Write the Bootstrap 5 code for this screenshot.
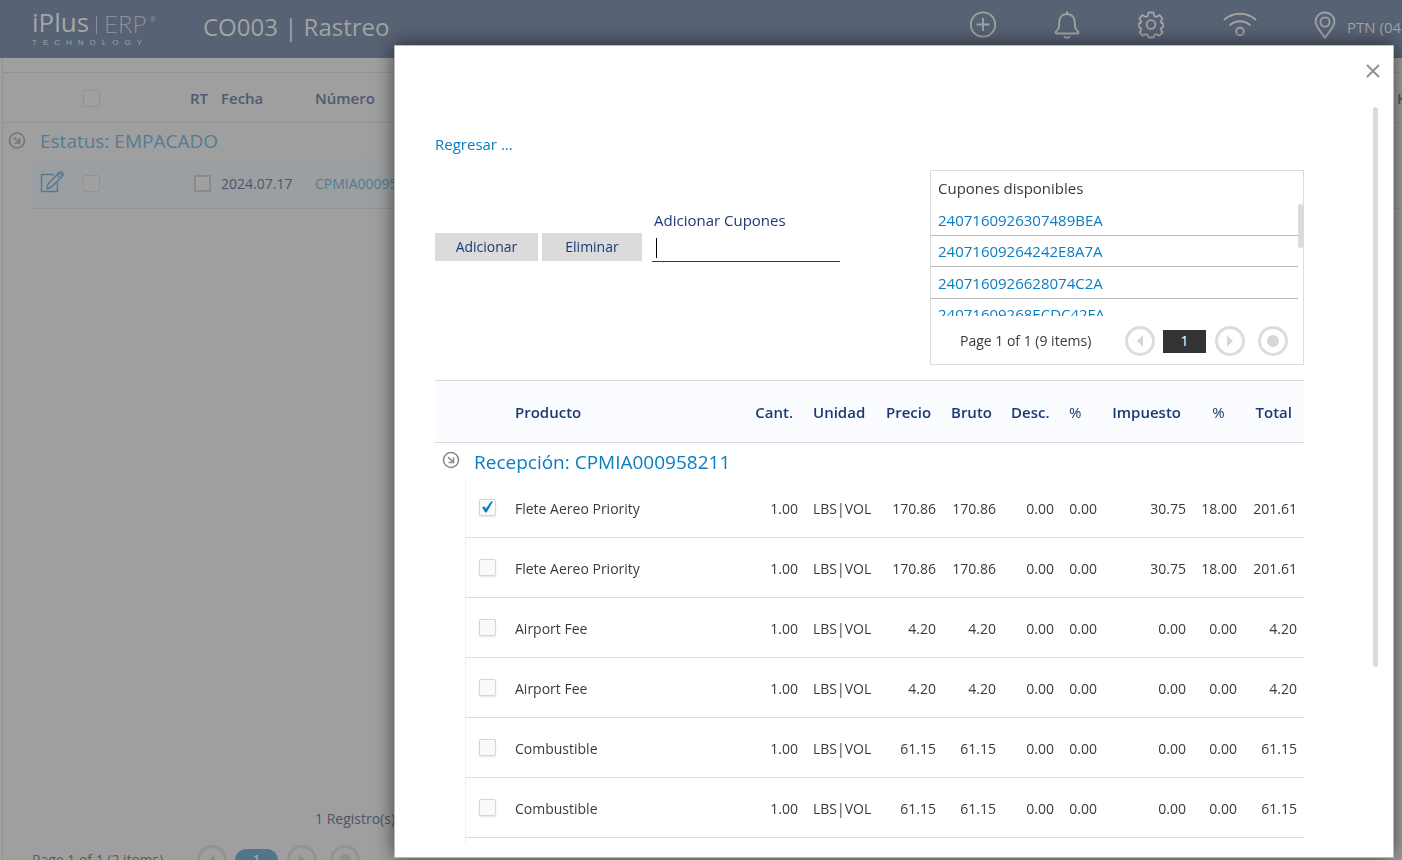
<!DOCTYPE html>
<html lang="es">
<head>
<meta charset="utf-8">
<meta name="viewport" content="width=device-width, initial-scale=1">
<title>CO003 | Rastreo</title>
<link href="https://cdn.jsdelivr.net/npm/bootstrap@5.3.0/dist/css/bootstrap.min.css" rel="stylesheet">
<style>
  body { font-family: "Open Sans", "Noto Sans", sans-serif; font-size: 14px; line-height: 20px; background: #9f9f9f; color: #4b5568; height: 100vh; }
  a { text-decoration: none; }
  svg { display: block; fill: none; stroke: currentColor; }

  /* top bar */
  .topbar { height: 58px; background: #576274; color: #a3a3a3; }
  .brand { width: 203px; padding: 9px 0 0 32px; color: #a3a5a9; }
  .brand-name { font-size: 26px; line-height: 26px; height: 30px; gap: 7px; }
  .brand-name .bar { width: 1px; height: 18px; background: #8a919c; margin-top: 7px; }
  .brand-name .thin { font-family: "Lato", sans-serif; font-weight: 300; font-size: 24px; line-height: 30px; color: #8a919c; }
  .brand-name .reg { font-size: 8px; line-height: 20px; color: #8a919c; margin-left: -4px; }
  .brand-sub { font-family: "Liberation Sans", sans-serif; font-size: 8px; line-height: 8px; letter-spacing: 6px; color: #9ca1a8; }
  .page-title { font-size: 24px; font-weight: 400; line-height: 54px; }
  .tools { width: 461px; height: 50px; }
  .tools button { width: 84px; flex-shrink: 0; border: 0; background: none; color: inherit; padding: 0; }
  .tools .wide { width: 94px; }
  .tools .place { width: auto; padding-left: 26px; gap: 10px; font-size: 15px; }

  /* dimmed grid */
  .board { margin-left: 2px; border-left: 1px solid #929292; padding-top: 14px; overflow: hidden; }
  .board table { table-layout: fixed; width: 1500px; border-collapse: separate; border-spacing: 0; }
  .board th { height: 51px; border: solid #929292; border-width: 1px 0; font-size: 15px; font-weight: 600; color: #505b70; padding: 1px 0 0; }
  .board td { padding: 0; }
  .board .grp td { height: 36px; font-size: 19px; color: #557b93; }
  .board .item td { height: 50px; background: #9c9fa1; border-bottom: 1px solid #929292; }
  .board .item td:first-child { background: none; border: 0; }
  .board .item a, .board .edit { color: #557b93; }
  .edit { border: 0; background: none; padding: 0 0 0 7px; }
  .tick.dim { border-color: #929292; background: #a0a0a0; box-shadow: none; margin-left: 1px; }
  .tick.thick { border: 2px solid #8a8a8a; border-radius: 0; margin-left: 12px; }
  .total { padding: 600px 0 0 312px; height: 625px; }
  .board .pager { padding-left: 29px; color: #5c5c5c; height: 52px; }
  .board .pager .ring { border-color: #929292; color: #8f8f8f; }
  .board .pager .num { background: #52758a; border-radius: 12px; color: #a9b4ba; }

  .tick { appearance: none; display: block; width: 17px; height: 17px; margin: 0; border: 1px solid #d6d6d6; border-radius: 2px; background: #fafafa; box-shadow: 0 1px 2px #e4e4e4; }
  .tick:checked { background: #fafafa url("data:image/svg+xml,%3Csvg xmlns='http://www.w3.org/2000/svg' viewBox='0 0 15 15'%3E%3Cpath d='M2.200 7.500 4.200 6.300 5.800 8.700 11 1.500 13 1.500 6.500 12.500 5.200 12.500Z' fill='%230a7cc1'/%3E%3C/svg%3E") center/15px no-repeat; }

  .pager { height: 50px; }
  .pager-text { width: 165px; }
  .ring { width: 30px; height: 30px; border: 3px solid #dcdcdc; border-radius: 50%; background: none; color: #d6d6d6; padding: 0; display: flex; align-items: center; justify-content: center; }
  .ring svg { fill: currentColor; stroke: none; }
  .ring.all { margin-left: 13px; }
  .num { width: 43px; height: 23px; background: #333; color: #fff; border: 0; padding: 0; margin: 0 9px 0 8px; }

  /* popup */
  .popup { position: fixed; top: 45px; right: 8px; bottom: 2px; left: 394px; background: #fff; border: 1px solid #bdbdbd; box-shadow: 0 0 18px rgba(0, 0, 0, .6); color: #3a3a3a; }
  .popup-body { height: calc(100% - 12px); padding: 0 89px 0 40px; overflow: hidden; }
  .closer { position: absolute; top: 13px; right: 8px; width: 24px; height: 24px; padding: 0; border: 0; background: none; color: #919191; display: flex; align-items: center; justify-content: center; }
  .thumb { position: absolute; background: #dbdbdb; border-radius: 3px; width: 5px; }
  .popup-body > .thumb { top: 61px; right: 15px; height: 560px; }
  .popup a { color: #0a7cc1; font-size: 15px; }
  .back { padding-top: 88px; height: 124px; }
  .entry { padding-top: 40px; }
  .act { background: #dbdbdb; color: #1b3a74; border: 0; height: 28px; width: 103px; padding: 0 0 1px; margin-bottom: 1px; }
  .act + .act { width: 100px; margin-left: 4px; }
  .field { color: #1b3a74; width: 188px; margin-left: 10px; font-size: 15px; }
  .field label { display: block; padding-left: 2px; height: 24px; }
  .field input { width: 100%; height: 28px; border: 0; border-bottom: 1px solid #1b3a74; padding: 0 4px; outline: 0; caret-color: transparent; background: linear-gradient(#000, #000) 4px 4px / 1px 20px no-repeat; }
  .coupons { width: 374px; height: 195px; border: 1px solid #dbdbdb; margin-top: 124px; }
  .coupons h2 { font-size: 15px; line-height: 35px; height: 33px; padding-left: 7px; margin: 0; }
  .coupon-list { height: 112px; overflow: hidden; padding: 0 5px 0 0; }
  .coupon-list li { height: 31px; border-bottom: 1px solid #b9b9b9; padding-left: 7px; line-height: 31px; }
  .coupon-list li:nth-child(odd) { height: 32px; line-height: 32px; }
  .coupon-list .thumb { right: 0; top: 0; height: 44px; }
  .coupons .pager { padding-left: 29px; }

  .lines { margin-top: 15px; width: 100%; table-layout: fixed; border-collapse: separate; border-spacing: 0; }
  .lines th { height: 63px; background: #fafcff; border: solid #dbdbdb; border-width: 1px 0; color: #1b3a74; font-size: 15px; font-weight: 600; padding: 0 12px 0 8px; }
  .lines th.pct { font-weight: 400; }
  .lines td { padding: 2px 7px 0 8px; }
  .lines .grp td { height: 35px; padding: 2px 0 0 8px; font-size: 19px; color: #0a7cc1; }
  .lines .grp td:first-child { padding: 0 0 2px 6px; }
  .lines .item td { height: 60px; border-bottom: 1px solid #dbdbdb; }
  .lines .item td:first-child { border-bottom: 0; border-right: 1px solid #f0f0f0; }
  .lines .item td:nth-child(2) { padding: 0 0 0 13px; }
  .lines .mark-open { color: #8c8c8c; }
  .board .mark-open { color: #757575; }
</style>
<script src="https://cdn.jsdelivr.net/npm/bootstrap@5.3.0/dist/js/bootstrap.bundle.min.js"></script>
</head>
<body class="overflow-hidden">

<header class="topbar d-flex align-items-start overflow-hidden text-nowrap">
  <div class="brand flex-shrink-0">
    <div class="brand-name d-flex"><span>iPlus</span><span class="bar"></span><span class="thin">ERP</span><span class="reg">®</span></div>
    <div class="brand-sub">TECHNOLOGY</div>
  </div>
  <h1 class="page-title m-0">CO003 | Rastreo</h1>
  <div class="tools ms-auto d-flex flex-shrink-0">
    <button class="d-flex align-items-center justify-content-center" aria-label="Nuevo"><svg width="28" height="28" viewBox="0 0 28 28" stroke-width="1.800"><circle cx="14" cy="13.500" r="12.200"/><path d="M14 7v13M7.500 13.500h13"/></svg></button>
    <button class="d-flex align-items-center justify-content-center" aria-label="Avisos"><svg width="28" height="28" viewBox="0 0 28 28" stroke-width="1.800" stroke-linecap="round" stroke-linejoin="round"><path d="M14 1v2M14 3C9 3 6.300 6.500 6.300 11c0 6-1 7.500-3.300 9.500-1 1-.7 2 .5 2h21c1.200 0 1.500-1 .5-2-2.300-2-3.300-3.500-3.300-9.500C21.700 6.500 19 3 14 3zM11.500 25.700c1 1.500 4 1.500 5 0"/></svg></button>
    <button class="d-flex align-items-center justify-content-center" aria-label="Ajustes"><svg width="28" height="28" viewBox="0 0 28 28" stroke-width="1.800" stroke-linejoin="round"><path d="M11.500 1.500h5l.8 3.500 2 .9 3.200-2 3 4-1.700 2.600.7 1.500 1.500.3v4l-1.700.5-.7 1.800 1.800 2.700-3.200 3.400-2.800-1.500-2 .8-.9 2.500h-5l-.9-2.500-2-.8-2.800 1.500-3.200-3.400 1.800-2.700-.7-1.800-1.700-.5v-4l1.500-.3.7-1.500L2.500 7.900l3-4 3.200 2 2-.9z"/><circle cx="14" cy="13.500" r="4.300"/></svg></button>
    <button class="wide d-flex align-items-center justify-content-center" aria-label="Red"><svg width="34" height="28" viewBox="0 0 34 28" stroke-width="1.900" stroke-linecap="round"><path d="M1.500 8.500C10 .8 24 .8 32.500 8.500M7 14c6-5 14-5 20 0"/><circle cx="17" cy="20.500" r="3.800"/></svg></button>
    <button class="place d-flex align-items-center"><svg width="24" height="28" viewBox="0 0 24 28" stroke-width="1.800"><path d="M12 27C8 20.500 2.500 15.500 2.500 10.500a9.500 9 0 0 1 19 0C21.500 15.500 16 20.500 12 27z"/><circle cx="12" cy="11" r="4.600"/></svg><span class="pt-1">PTN (04)</span></button>
  </div>
</header>

<main class="board">
  <table>
    <colgroup><col style="width:29px"><col style="width:50px"><col style="width:100px"><col style="width:39px"><col style="width:94px"><col style="width:1082px"><col></colgroup>
    <thead><tr><th></th><th></th><th><input type="checkbox" class="tick dim" aria-label="Todos"></th><th class="ps-2">RT</th><th>Fecha</th><th>Número</th><th>K</th></tr></thead>
    <tbody>
      <tr class="grp"><td class="align-top pt-2 ps-1"><svg class="mark-open" width="20" height="20" viewBox="0 0 20 20" stroke-width="1.600"><circle cx="10" cy="9.500" r="7.500"/><path d="M7 6.500l5 5M12.500 7v5h-5"/></svg></td><td colspan="6" class="ps-2">Estatus: EMPACADO</td></tr>
      <tr class="item">
        <td></td>
        <td><button class="edit" aria-label="Editar"><svg width="26" height="24" viewBox="0 0 26 24" stroke-width="1.500" stroke-linejoin="round"><path d="M15 5.500H2.500v17h16v-9"/><path d="M8 20l1-5L20 3.500l3.500 3.500L12.500 18zM18 6l3.500 3.500M20 3.500c2-2 5.500 1 3.500 3.500"/></svg></button></td>
        <td><input type="checkbox" class="tick dim" aria-label="Elegir"></td>
        <td><input type="checkbox" class="tick dim thick" aria-label="RT"></td>
        <td>2024.07.17</td><td><a href="#">CPMIA000958211</a></td><td></td>
      </tr>
    </tbody>
  </table>
  <div class="total">1 Registro(s)</div>
  <div class="pager d-flex align-items-center"><span class="pager-text">Page 1 of 1 (2 items)</span>
    <button class="ring" aria-label="Anterior"><svg width="8" height="12" viewBox="0 0 8 12"><path d="M7 0v12L1 6z"/></svg></button>
    <button class="num">1</button>
    <button class="ring" aria-label="Siguiente"><svg width="8" height="12" viewBox="0 0 8 12"><path d="M1 0v12l6-6z"/></svg></button>
    <button class="ring all" aria-label="Todo"><svg width="14" height="14" viewBox="0 0 14 14"><circle cx="7" cy="7" r="6"/></svg></button>
  </div>
</main>

<section class="popup" role="dialog" aria-label="Cupones">
  <button class="closer" aria-label="Cerrar"><svg width="14" height="14" viewBox="0 0 14 14" stroke-width="2" stroke-linecap="round"><path d="M1.500 1.500l11 11M12.500 1.500l-11 11"/></svg></button>
  <div class="popup-body">
    <div class="thumb"></div>
    <div class="d-flex justify-content-between">
      <div>
        <div class="back"><a href="#">Regresar ...</a></div>
        <div class="entry d-flex align-items-end">
          <button class="act">Adicionar</button>
          <button class="act">Eliminar</button>
          <div class="field"><label for="cup">Adicionar Cupones</label><input id="cup" type="text"></div>
        </div>
      </div>
      <div class="coupons">
        <h2 class="fw-normal">Cupones disponibles</h2>
        <div class="coupon-list position-relative">
          <div class="thumb"></div>
          <ul class="list-unstyled m-0">
            <li><a href="#">2407160926307489BEA</a></li>
            <li><a href="#">24071609264242E8A7A</a></li>
            <li><a href="#">2407160926628074C2A</a></li>
            <li><a href="#">24071609268ECDC42FA</a></li>
          </ul>
        </div>
        <div class="pager d-flex align-items-center"><span class="pager-text">Page 1 of 1 (9 items)</span>
          <button class="ring" aria-label="Anterior"><svg width="8" height="12" viewBox="0 0 8 12"><path d="M7 0v12L1 6z"/></svg></button>
          <button class="num">1</button>
          <button class="ring" aria-label="Siguiente"><svg width="8" height="12" viewBox="0 0 8 12"><path d="M1 0v12l6-6z"/></svg></button>
          <button class="ring all" aria-label="Todo"><svg width="14" height="14" viewBox="0 0 14 14"><circle cx="7" cy="7" r="6"/></svg></button>
        </div>
      </div>
    </div>

    <table class="lines">
      <colgroup><col style="width:31px"><col style="width:41px"><col><col style="width:58px"><col style="width:73px"><col style="width:65px"><col style="width:60px"><col style="width:58px"><col style="width:43px"><col style="width:89px"><col style="width:51px"><col style="width:60px"></colgroup>
      <thead><tr><th></th><th></th><th>Producto</th><th class="text-end">Cant.</th><th>Unidad</th><th class="text-end">Precio</th><th class="text-end">Bruto</th><th class="text-end">Desc.</th><th class="pct">%</th><th class="text-end">Impuesto</th><th class="pct text-center px-0">%</th><th class="text-end">Total</th></tr></thead>
      <tbody id="rows">
        <tr class="grp"><td><svg class="mark-open" width="20" height="20" viewBox="0 0 20 20" stroke-width="1.600"><circle cx="10" cy="10" r="7.500"/><path d="M7 7l5 5M12.500 7.500v5h-5"/></svg></td><td colspan="11">Recepción: CPMIA000958211</td></tr>
      </tbody>
    </table>
  </div>
</section>

<script>
  const data = [
    ["Flete Aereo Priority", "170.86", "30.75", "18.00", "201.61"],
    ["Flete Aereo Priority", "170.86", "30.75", "18.00", "201.61"],
    ["Airport Fee", "4.20", "0.00", "0.00", "4.20"],
    ["Airport Fee", "4.20", "0.00", "0.00", "4.20"],
    ["Combustible", "61.15", "0.00", "0.00", "61.15"],
    ["Combustible", "61.15", "0.00", "0.00", "61.15"],
    ["", "", "", "", ""]
  ];
  const end = v => `<td class="text-end">${v}</td>`;
  document.getElementById("rows").insertAdjacentHTML("beforeend", data.map(([name, price, tax, rate, total], i) => name
    ? `<tr class="item"><td></td><td><input type="checkbox" class="tick" aria-label="${name}"${i ? "" : " checked"}></td><td>${name}</td>${end("1.00")}<td>LBS|VOL</td>${end(price)}${end(price)}${end("0.00")}${end("0.00")}${end(tax)}${end(rate)}${end(total)}</tr>`
    : `<tr class="item"><td></td><td></td><td colspan="10"></td></tr>`).join(""));
</script>
</body>
</html>
